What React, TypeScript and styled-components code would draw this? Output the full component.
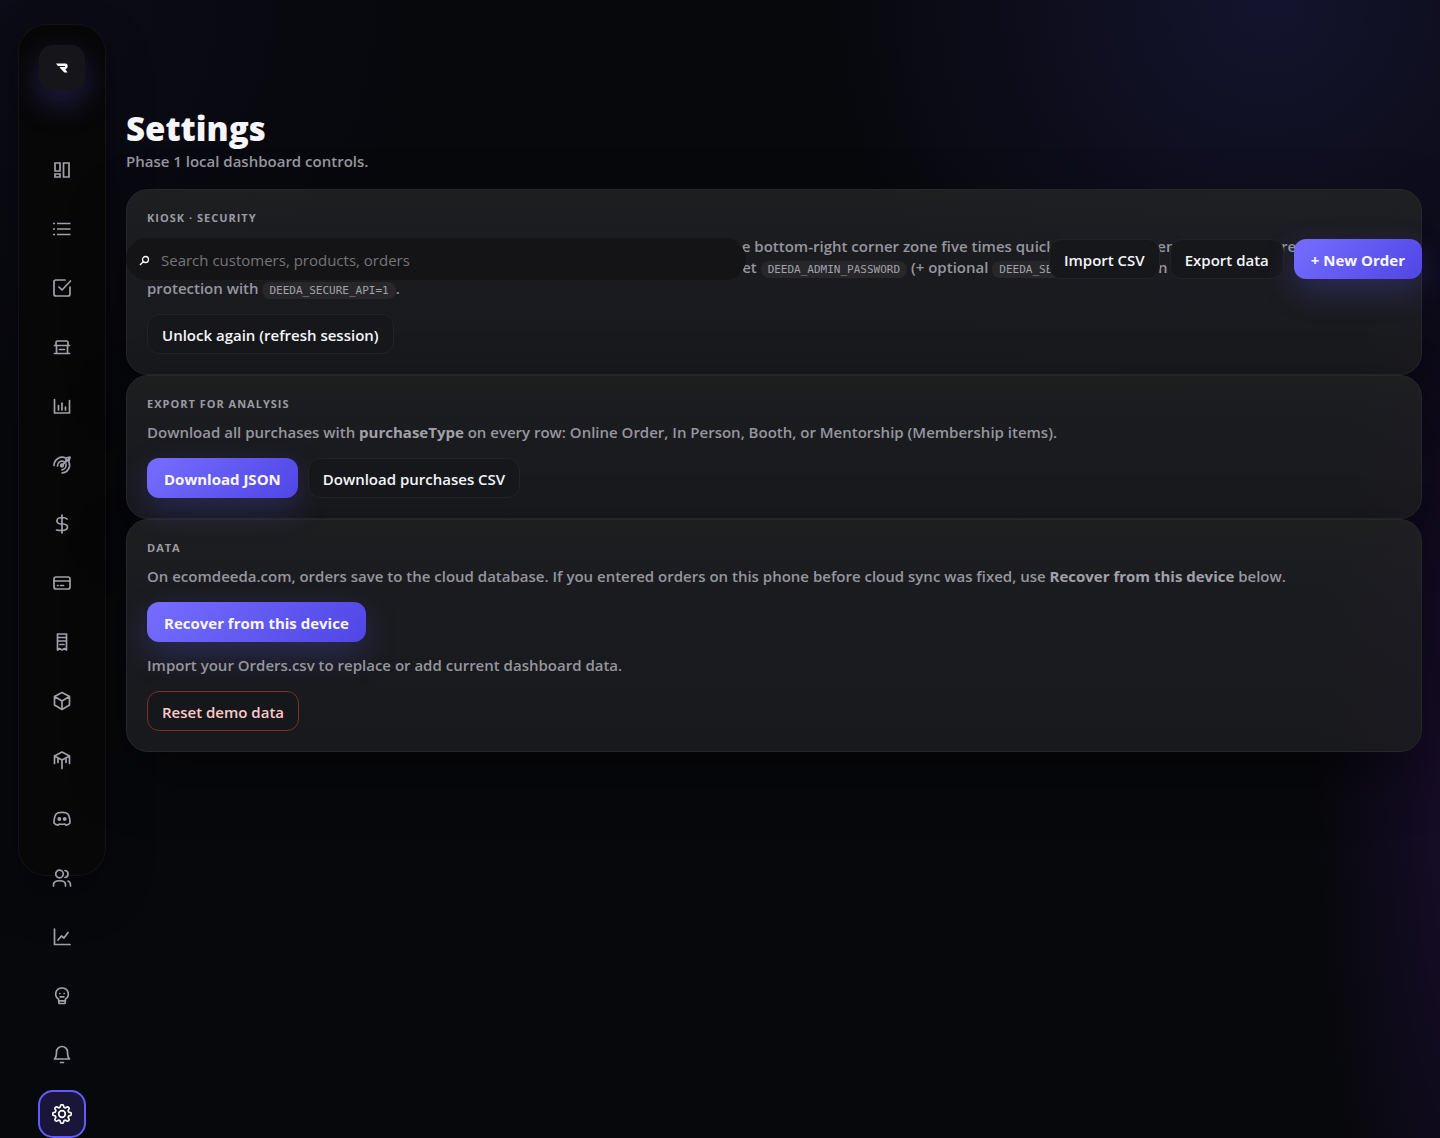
import React from "react";
import styled, { createGlobalStyle, css } from "styled-components";

const Global = createGlobalStyle`
  * { box-sizing: border-box; }
  body {
    margin: 0;
    background: #05070b;
    color: #f5f5fa;
    font-family: "Open Sans", "Noto Sans", sans-serif;
    font-size: 15px;
    line-height: 21px;
  }
  button, input { font: inherit; }
`;

const Shell = styled.div`
  display: flex;
  align-items: flex-start;
  gap: 20px;
  min-height: 100vh;
  padding: 24px 18px 0;
  background:
    radial-gradient(circle at 88% 0%, rgba(99, 91, 255, 0.14), transparent 26%),
    radial-gradient(ellipse 180px 680px at 104% 68%, rgba(90, 30, 165, 0.26), transparent 100%),
    radial-gradient(circle at 0% 0%, rgba(70, 65, 190, 0.06), transparent 24%),
    #07080c;
`;

const Sidebar = styled.aside`
  display: flex;
  flex: 0 0 88px;
  flex-direction: column;
  align-items: center;
  height: 852px;
  padding: 20px 0;
  border: 1px solid rgba(255, 255, 255, 0.05);
  border-radius: 28px;
  background: #070707;
  box-shadow: 0 20px 48px rgba(0, 0, 0, 0.3);
`;

const Brand = styled.a`
  display: grid;
  flex: none;
  place-items: center;
  width: 46px;
  height: 46px;
  margin-bottom: 55px;
  border-radius: 14px;
  background: #16161a;
  color: #fff;
  box-shadow: 0 12px 32px rgba(99, 91, 255, 0.28);
`;

const Nav = styled.nav`
  display: flex;
  flex-direction: column;
  gap: 11px;
`;

const NavButton = styled.button<{ $active?: boolean }>`
  display: grid;
  flex: none;
  place-items: center;
  width: 48px;
  height: 48px;
  padding: 0;
  border: 2px solid ${(p) => (p.$active ? "#635bff" : "transparent")};
  border-radius: 15px;
  background: ${(p) => (p.$active ? "#19163a" : "transparent")};
  color: ${(p) => (p.$active ? "#fff" : "#a1a1aa")};
`;

const Main = styled.main`
  position: relative;
  flex: 1;
  min-width: 0;
  padding-top: 84px;
`;

const Title = styled.h1`
  margin: 0;
  font-size: 33px;
  font-weight: 800;
  line-height: 42px;
`;

const Subtitle = styled.p`
  margin: 0 0 16px;
  color: #96969e;
  font-weight: 600;
  line-height: 23px;
`;

const Topbar = styled.div`
  position: absolute;
  top: 214px;
  left: 0;
  right: 0;
  display: flex;
  align-items: center;
  justify-content: space-between;
  gap: 16px;
`;

const Search = styled.label`
  display: flex;
  flex: 0 1 620px;
  align-items: center;
  gap: 11px;
  height: 42px;
  padding: 2px 13px 0;
  border-radius: 21px;
  background: #141416;
`;

const SearchInput = styled.input`
  flex: 1;
  min-width: 0;
  padding: 0;
  border: 0;
  outline: 0;
  background: transparent;
  color: #f5f5fa;
  &::placeholder { color: #75757a; opacity: 1; }
`;

const Actions = styled.div`
  display: flex;
  flex-wrap: wrap;
  gap: 10px;
`;

const variants = {
  plain: css`
    border: 1px solid #222327;
    background: #16171b;
    color: #f5f5fa;
  `,
  primary: css`
    padding: 2px 17px 0;
    border: 0;
    background: linear-gradient(135deg, #766dff, #4f46e5);
    color: #f8f7ff;
    font-weight: 700;
    box-shadow: 0 12px 32px rgba(99, 91, 255, 0.25);
  `,
  danger: css`
    border: 1px solid #7f2d31;
    background: #16171b;
    color: #fecaca;
  `,
};

const Button = styled.button<{ $kind?: keyof typeof variants }>`
  height: 40px;
  padding: 2px 14px 0;
  border-radius: 12px;
  font-weight: 600;
  white-space: nowrap;
  ${(p) => variants[p.$kind ?? "plain"]}
`;

const Card = styled.section`
  padding: 18px 20px 20px;
  border: 1px solid #26272a;
  border-radius: 22px;
  background: linear-gradient(180deg, rgba(34, 35, 36, 0.84) 0%, rgba(31, 32, 36, 0.84) 25%, rgba(27, 28, 31, 0.84) 100%);
  box-shadow: 0 24px 60px rgba(0, 0, 0, 0.38);
`;

const CardTitle = styled.h2`
  margin: 0 0 8px;
  color: #9b9ba3;
  font-size: 11px;
  font-weight: 700;
  letter-spacing: 1px;
  line-height: 20px;
  text-transform: uppercase;
`;

const Text = styled.p`
  margin: 0 0 15px;
  color: #96969e;
  font-weight: 600;
  & strong { color: #a1a1aa; font-weight: 700; }
  ${Actions} + & { margin-top: 13px; }
`;

const Code = styled.code`
  padding: 2px 7px;
  border-radius: 8px;
  background: #27272a;
  color: #a1a1aa;
  font-family: "DejaVu Sans Mono", monospace;
  font-size: 11px;
  font-weight: 400;
  line-height: 14px;
`;

const Svg = ({ children }: { children: React.ReactNode }) => (
  <svg width="20" height="20" viewBox="0 0 20 20" fill="none" stroke="currentColor" strokeWidth="1.7" strokeLinecap="round" strokeLinejoin="round" aria-hidden="true">
    {children}
  </svg>
);

/* Eight rounded teeth around the hub of the settings gear. */
const gear = Array.from({ length: 96 }, (_, i) => {
  const a = (i / 96) * Math.PI * 2;
  const r = 8.1 + 1.2 * Math.tanh(2.2 * Math.cos(8 * a));
  return `${(10 + r * Math.cos(a)).toFixed(2)},${(10 + r * Math.sin(a)).toFixed(2)}`;
}).join(" ");

const items: [string, React.ReactNode][] = [
  ["Dashboard", <path strokeLinejoin="miter" d="M3 3h5v8H3zM3 14h5v3H3zM11.5 3H17v14h-5.5z" />],
  ["Orders", <path strokeLinecap="butt" d="M5 4.5h13.5M5 10h13.5M5 15.5h13.5M1 4.5h2M1 10h2M1 15.5h2" />],
  ["Tasks", <path d="M13 2H4a2 2 0 0 0-2 2v12a2 2 0 0 0 2 2h12a2 2 0 0 0 2-2V9M7 9l3 3 8.500-9" />],
  ["Store", <path d="M2.500 8.500h15M4 8.500v-3q0-1.500 1.500-1.500h9q1.500 0 1.500 1.500v3M4.500 8.500V16.500M15.500 8.500V16.500M2.500 16.500h15M7.500 12.500h5" />],
  ["Reports", <path d="M2.500 3.500v13.500h15V4.500M6.500 9.500v4.500M10 7v7M13.500 11v3" />],
  ["Goals", <><path d="M2 10.500A8.200 8.200 0 0 1 14 3.200M17 7a8 8 0 0 1-7 11M5.500 11a4.600 4.600 0 0 1 6.500-4.500M14 9a5 5 0 0 1-4 5.800M9 11l9-8M14 3.500V6h3M14 3l4-1-1 4" /><circle cx="10" cy="10.500" r="1.300" /></>],
  ["Revenue", <path d="M10 1v18M15 5c-1-1.200-3-1.500-5-1.500C3.500 3.500 3.500 9.500 8.500 10h3c5.500.5 5.500 6.500-1.500 6.500-2 0-4 0-5.500-.5" />],
  ["Cards", <><rect x="2" y="4" width="16" height="12" rx="2" /><path d="M2 8h16M5.500 12.500h.5M8.500 12.500h3" /></>],
  ["Receipts", <path d="M5.500 2h9v16l-2-1.500-2.500 1.500-2.500-1.500-2 1.500zM6 5.500h8M6 9h8M8 12.500h4" />],
  ["Products", <path d="m10 1.500 7.500 4V14L10 18.500 2.500 14V5.500zM2.500 5.500l7.500 4.500 7.500-4.500M10 10v8.500" />],
  ["Inventory", <path d="M2.500 13.500V6L10 2l7.500 4v7.500M2.500 6l7.500 4 7.500-4M10 10v8.500M6 8.500v4M14 8.500v4" />],
  ["Discord", <><path d="M6 3.800q4-1 8 0 2 .3 3 3.200 1.200 3.500 1 7-1.500 2-4 2.200l-1.200-1.200q-2.800.5-5.600 0L6 16.200Q3.500 16 2 14q-.2-3.500 1-7 1-2.900 3-3.200z" /><circle cx="7.300" cy="10" r="1.100" fill="currentColor" /><circle cx="12.700" cy="10" r="1.100" fill="currentColor" /></>],
  ["Customers", <><circle cx="7.500" cy="6" r="3.800" /><path d="M1.500 18v-1.500c0-5 12-5 12 0V18M13 2.500c4 .5 4 6.500 0 7M16 13c2 .5 2.500 2 2.500 5" /></>],
  ["Analytics", <path d="M2.500 2v15.500h15.500M6 13l3.500-4 2.500 2 4-5.500" />],
  ["Insights", <><path d="M6.500 13C1.500 9.500 3.500 2 10 2s8.500 7.500 3.500 11l-.5 4.500H7zM7 14.800h6" /><path d="M7.800 7.500h.1M12.100 7.500h.1M8.200 10.800h3.600" /></>],
  ["Alerts", <path d="M2.500 14C4 12.500 4.500 10.500 4.500 7a5.500 5.500 0 0 1 11 0c0 3.500.5 5.500 2 7zM8.500 17.500h3" />],
];

export default function App() {
  return (
    <>
      <Global />
      <Shell>
        <Sidebar>
          <Brand href="#" aria-label="Home">
            <svg width="12" height="10" viewBox="0 0 12 10" fill="currentColor" aria-hidden="true">
              <path d="M0 .5h9.500C12.500.5 12.300 5.500 9.300 6L11.500 9.500H8.300L5 6 3.500 4h5c1 0 1-1 0-1H2z" />
            </svg>
          </Brand>
          <Nav aria-label="Primary">
            {items.map(([label, shape]) => (
              <NavButton key={label} aria-label={label}><Svg>{shape}</Svg></NavButton>
            ))}
            <NavButton $active aria-label="Settings">
              <Svg><polygon points={gear} /><circle cx="10" cy="10" r="3.300" /></Svg>
            </NavButton>
          </Nav>
        </Sidebar>
        <Main>
          <Title>Settings</Title>
          <Subtitle>Phase 1 local dashboard controls.</Subtitle>
          <Card>
            <CardTitle>Kiosk · Security</CardTitle>
            <Text>
              This dashboard runs as a locked kiosk. To open the admin unlock prompt, press the bottom-right corner zone five times quickly. Before any entry here is not recorded.<br />
              This unlock status stays on this device only. For the shared server password, first set <Code>DEEDA_ADMIN_PASSWORD</Code> (+ optional <Code>DEEDA_SECRET</Code>) to turn on the session run<br />
              protection with <Code>DEEDA_SECURE_API=1</Code>.
            </Text>
            <Actions><Button>Unlock again (refresh session)</Button></Actions>
          </Card>
          <Card>
            <CardTitle>Export for analysis</CardTitle>
            <Text>Download all purchases with <strong>purchaseType</strong> on every row: Online Order, In Person, Booth, or Mentorship (Membership items).</Text>
            <Actions>
              <Button $kind="primary">Download JSON</Button>
              <Button>Download purchases CSV</Button>
            </Actions>
          </Card>
          <Card>
            <CardTitle>Data</CardTitle>
            <Text>On ecomdeeda.com, orders save to the cloud database. If you entered orders on this phone before cloud sync was fixed, use <strong>Recover from this device</strong> below.</Text>
            <Actions><Button $kind="primary">Recover from this device</Button></Actions>
            <Text>Import your Orders.csv to replace or add current dashboard data.</Text>
            <Actions><Button $kind="danger">Reset demo data</Button></Actions>
          </Card>
          <Topbar>
            <Search>
              <svg width="11" height="11" viewBox="0 0 11 11" fill="none" stroke="#fff" strokeWidth="1.300" aria-hidden="true">
                <circle cx="6.500" cy="4.500" r="3" /><path d="M4.200 6.700 1 10" />
              </svg>
              <SearchInput type="search" aria-label="Search" placeholder="Search customers, products, orders" />
            </Search>
            <Actions>
              <Button>Import CSV</Button>
              <Button>Export data</Button>
              <Button $kind="primary">+ New Order</Button>
            </Actions>
          </Topbar>
        </Main>
      </Shell>
    </>
  );
}
